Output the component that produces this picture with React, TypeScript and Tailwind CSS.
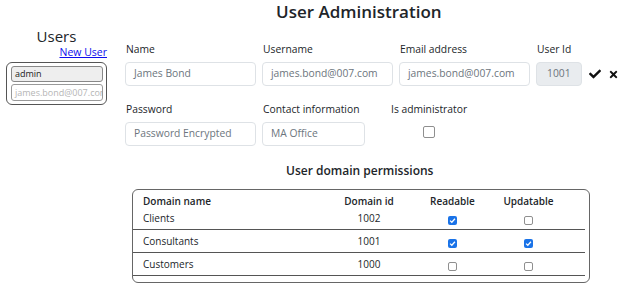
import { FaCheck, FaTimes } from 'react-icons/fa';

type Permission = {
    name: string;
    id: number;
    readable: boolean;
    updatable: boolean;
};

const permissions: Permission[] = [
    { name: 'Clients', id: 1002, readable: true, updatable: false },
    { name: 'Consultants', id: 1001, readable: true, updatable: true },
    { name: 'Customers', id: 1000, readable: false, updatable: false },
];

function SmallCheck({ checked }: { checked: boolean }) {
    if (checked) {
        return (
            <span className="inline-flex h-[9px] w-[9px] items-center justify-center rounded-[2px] bg-[#1a73e8]">
                <svg viewBox="0 0 10 10" className="h-[7px] w-[7px]">
                    <path d="M1.5 5.2 L4 7.5 L8.5 2.5" fill="none" stroke="white" strokeWidth="1.8" />
                </svg>
            </span>
        );
    }
    return <span className="inline-block h-[9px] w-[9px] rounded-[2px] border border-[#8f8f8f] bg-white" />;
}

function Field({ label, value, width = 'w-[131px]', muted = false }: { label: string; value: string; width?: string; muted?: boolean }) {
    return (
        <div className={`flex flex-col ${width}`}>
            <label className="mb-[6px] whitespace-nowrap pl-[1px] text-[10.3px] leading-[14px] text-[#212529]">{label}</label>
            <div
                className={`flex h-[24px] items-center overflow-hidden whitespace-nowrap rounded-[4px] border border-[#dee2e6] px-[8px] text-[10.3px] ${
                    muted ? 'bg-[#e9ecef] pl-[10px]' : 'bg-white'
                } text-[#6c757d]`}
            >
                {value}
            </div>
        </div>
    );
}

const cols = 'grid-cols-[200px_72px_95px_57px]';

export default function App() {
    return (
        <div className="flex h-[297px] w-[624px] bg-white font-['Segoe_UI','Open_Sans',sans-serif] text-[#212529]">
            <aside className="flex w-[113px] flex-col pt-[27px]">
                <h2 className="text-center text-[15px] font-medium leading-[18px] text-[#212529]">Users</h2>
                <a href="#" className="self-end pr-[6px] text-[10.5px] leading-[14px] text-[#0d0dee] underline">
                    New User
                </a>
                <div className="ml-[6px] mt-[3px] flex w-[101px] flex-col gap-[2px] rounded-[6px] border-[1.5px] border-[#555] p-[3px] pl-[4px]">
                    <div className="flex h-[16px] items-center rounded-[3px] border border-[#888] bg-[#eeeeee] px-[3px] text-[9px] text-[#222]">
                        admin
                    </div>
                    <div className="flex h-[17px] items-center overflow-hidden whitespace-nowrap rounded-[3px] border border-[#999] bg-white px-[3px] text-[9px] text-[#b5b5b5]">
                        james.bond@007.com
                    </div>
                </div>
            </aside>

            <main className="flex flex-1 flex-col pl-[12px]">
                <h1 className="pl-[151px] pt-[2px] text-[17px] font-semibold leading-[20px] text-[#212529]">User Administration</h1>

                <div className="mt-[20px] flex items-end gap-[6px]">
                    <Field label="Name" value="James Bond" />
                    <Field label="Username" value="james.bond@007.com" />
                    <Field label="Email address" value="james.bond@007.com" />
                    <Field label="User Id" value="1001" width="w-[46px]" muted />
                    <div className="flex h-[24px] items-center gap-[7px] pl-[1px] text-[#111]">
                        <FaCheck className="h-[12px] w-[12px]" />
                        <FaTimes className="h-[11px] w-[11px]" />
                    </div>
                </div>

                <div className="mt-[16px] flex items-start gap-[6px]">
                    <Field label="Password" value="Password Encrypted" />
                    <Field label="Contact information" value="MA Office" width="w-[103px]" />
                    <div className="ml-[20px] flex flex-col items-center">
                        <label className="whitespace-nowrap text-[10.3px] leading-[14px] text-[#212529]">Is administrator</label>
                        <span className="mt-[10px] inline-block h-[12px] w-[12px] rounded-[2px] border border-[#8f8f8f] bg-white" />
                    </div>
                </div>

                <h3 className="mt-[17px] pl-[161px] text-[12px] font-semibold leading-[16px] text-[#212529]">User domain permissions</h3>

                <div className="ml-[7px] mt-[10px] w-[458px] rounded-[6px] border-[1.5px] border-[#666] pb-[6px] pr-[4px]">
                    <div className={`grid ${cols} pt-[4px] text-[10px] font-semibold leading-[14px]`}>
                        <div className="pl-[10px]">Domain name</div>
                        <div className="text-center">Domain id</div>
                        <div className="text-center">Readable</div>
                        <div className="text-center">Updatable</div>
                    </div>
                    {permissions.map((p, i) => (
                        <div
                            key={p.id}
                            className={`grid ${cols} items-start border-b-[1.5px] border-[#555] text-[10px] leading-[14px] ${
                                i === 0 ? 'h-[21.5px] pt-[3px]' : 'h-[23px] pt-[4px]'
                            }`}
                        >
                            <div className="pl-[10px]">{p.name}</div>
                            <div className="text-center">{p.id}</div>
                            <div className="flex justify-center pt-[5px]">
                                <SmallCheck checked={p.readable} />
                            </div>
                            <div className="flex justify-center pt-[5px]">
                                <SmallCheck checked={p.updatable} />
                            </div>
                        </div>
                    ))}
                </div>
            </main>
        </div>
    );
}
